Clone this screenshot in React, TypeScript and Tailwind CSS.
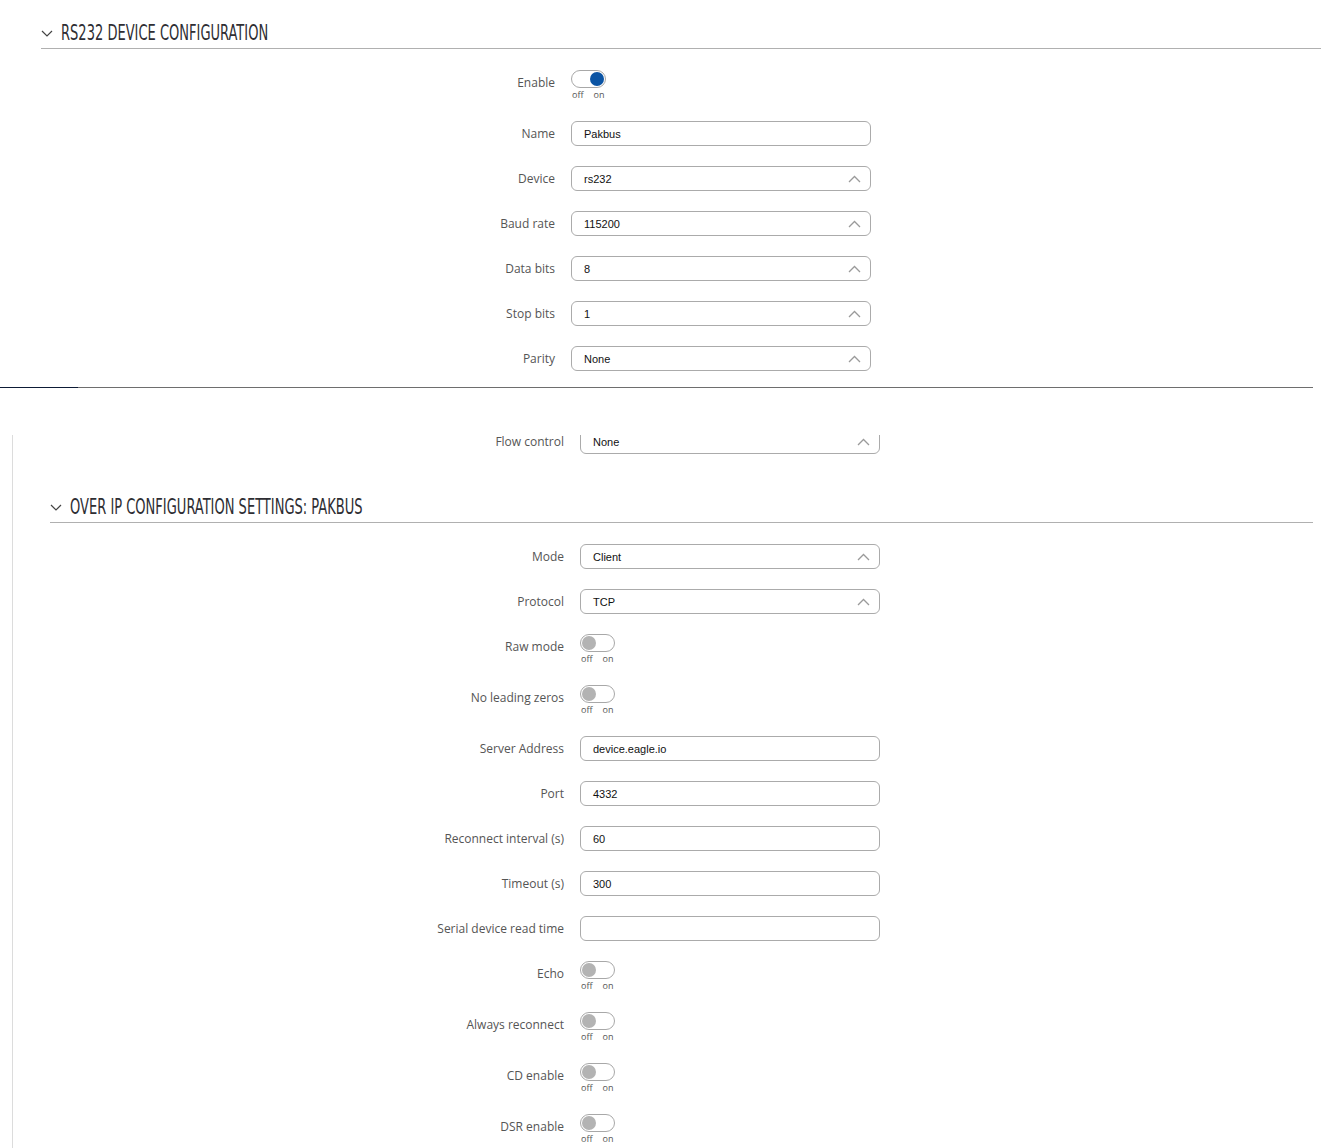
import type { ReactNode } from 'react';

type Field =
  | { label: string; kind: 'toggle'; on?: boolean }
  | { label: string; kind: 'text'; value: string }
  | { label: string; kind: 'select'; value: string };

const deviceFields: Field[] = [
  { label: 'Enable', kind: 'toggle', on: true },
  { label: 'Name', kind: 'text', value: 'Pakbus' },
  { label: 'Device', kind: 'select', value: 'rs232' },
  { label: 'Baud rate', kind: 'select', value: '115200' },
  { label: 'Data bits', kind: 'select', value: '8' },
  { label: 'Stop bits', kind: 'select', value: '1' },
  { label: 'Parity', kind: 'select', value: 'None' },
];

const ipFields: Field[] = [
  { label: 'Mode', kind: 'select', value: 'Client' },
  { label: 'Protocol', kind: 'select', value: 'TCP' },
  { label: 'Raw mode', kind: 'toggle' },
  { label: 'No leading zeros', kind: 'toggle' },
  { label: 'Server Address', kind: 'text', value: 'device.eagle.io' },
  { label: 'Port', kind: 'text', value: '4332' },
  { label: 'Reconnect interval (s)', kind: 'text', value: '60' },
  { label: 'Timeout (s)', kind: 'text', value: '300' },
  { label: 'Serial device read time', kind: 'text', value: '' },
  { label: 'Echo', kind: 'toggle' },
  { label: 'Always reconnect', kind: 'toggle' },
  { label: 'CD enable', kind: 'toggle' },
  { label: 'DSR enable', kind: 'toggle' },
];

function Toggle({ on }: { on?: boolean }) {
  return (
    <div className="flex flex-col">
      <div
        className={
          'w-[35px] h-[18px] rounded-full border border-[#a8a8a8] bg-white flex items-center px-[1px] ' +
          (on ? 'justify-end' : 'justify-start')
        }
      >
        <div className={'w-[14px] h-[14px] rounded-full ' + (on ? 'bg-[#0b54a4]' : 'bg-[#b3b3b3]')} />
      </div>
      <div className="flex gap-[10px] pl-[1px] text-[9px] leading-[13px] text-[#555] font-['Open_Sans',sans-serif]">
        <span>off</span>
        <span>on</span>
      </div>
    </div>
  );
}

function Input({ value, select }: { value: string; select?: boolean }) {
  return (
    <div className="w-[300px] h-[25px] rounded-[6px] border border-[#ababab] bg-white flex items-center justify-between pl-[12px] pr-[9px] pt-[1px] text-[11px] text-[#111] font-['Liberation_Sans',Arial,sans-serif]">
      <span>{value}</span>
      {select && (
        <svg width="13" height="8" viewBox="0 0 13 8" fill="none">
          <path d="M1 7 L6.5 1.5 L12 7" stroke="#9a9a9a" strokeWidth="1.3" />
        </svg>
      )}
    </div>
  );
}

function Row({ field }: { field: Field }) {
  const isToggle = field.kind === 'toggle';
  return (
    <div className={'flex gap-4 items-start ' + (isToggle ? 'h-[51px]' : 'h-[45px]')}>
      <div className="w-[514px] text-right text-[12px] leading-[25px] text-[#555] font-['Open_Sans',sans-serif]">
        {field.label}
      </div>
      {field.kind === 'toggle' && <Toggle on={field.on} />}
      {field.kind === 'text' && <Input value={field.value} />}
      {field.kind === 'select' && <Input value={field.value} select />}
    </div>
  );
}

function Heading({ children }: { children: ReactNode }) {
  return (
    <div className="h-[49px] pt-[17px] flex items-center gap-[8px] border-b border-[#b0b0b0]">
      <svg width="12" height="7" viewBox="0 0 12 7" fill="none" className="mt-[1px]">
        <path d="M1 1 L6 6 L11 1" stroke="#444" strokeWidth="1.2" />
      </svg>
      <span className="inline-block scale-y-[1.45] text-[14.5px] leading-[20px] tracking-[0px] text-[#2e2e33] font-['Liberation_Sans_Narrow','DejaVu_Sans_Condensed',sans-serif]">
        {children}
      </span>
    </div>
  );
}

export default function App() {
  return (
    <div className="w-[1321px] h-[1148px] overflow-hidden bg-white">
      <div className="h-[387px] overflow-hidden pl-[41px]">
        <Heading>RS232 DEVICE CONFIGURATION</Heading>
        <div className="pt-[21px]">
          {deviceFields.map(f => (
            <Row key={f.label} field={f} />
          ))}
        </div>
      </div>

      <div className="w-[1313px] h-px flex">
        <div className="w-[78px] bg-[#0d1b36]" />
        <div className="flex-1 bg-[#6e6e6e]" />
      </div>

      <div className="h-[47px]" />

      <div className="ml-[12px] w-[1301px] h-[713px] overflow-hidden border-l border-[#dcdcdc]">
        <div className="-mt-[6px] pl-[37px]">
          <Row field={{ label: 'Flow control', kind: 'select', value: 'None' }} />
          <Heading>OVER IP CONFIGURATION SETTINGS: PAKBUS</Heading>
          <div className="pt-[21px]">
            {ipFields.map(f => (
              <Row key={f.label} field={f} />
            ))}
          </div>
        </div>
      </div>
    </div>
  );
}
